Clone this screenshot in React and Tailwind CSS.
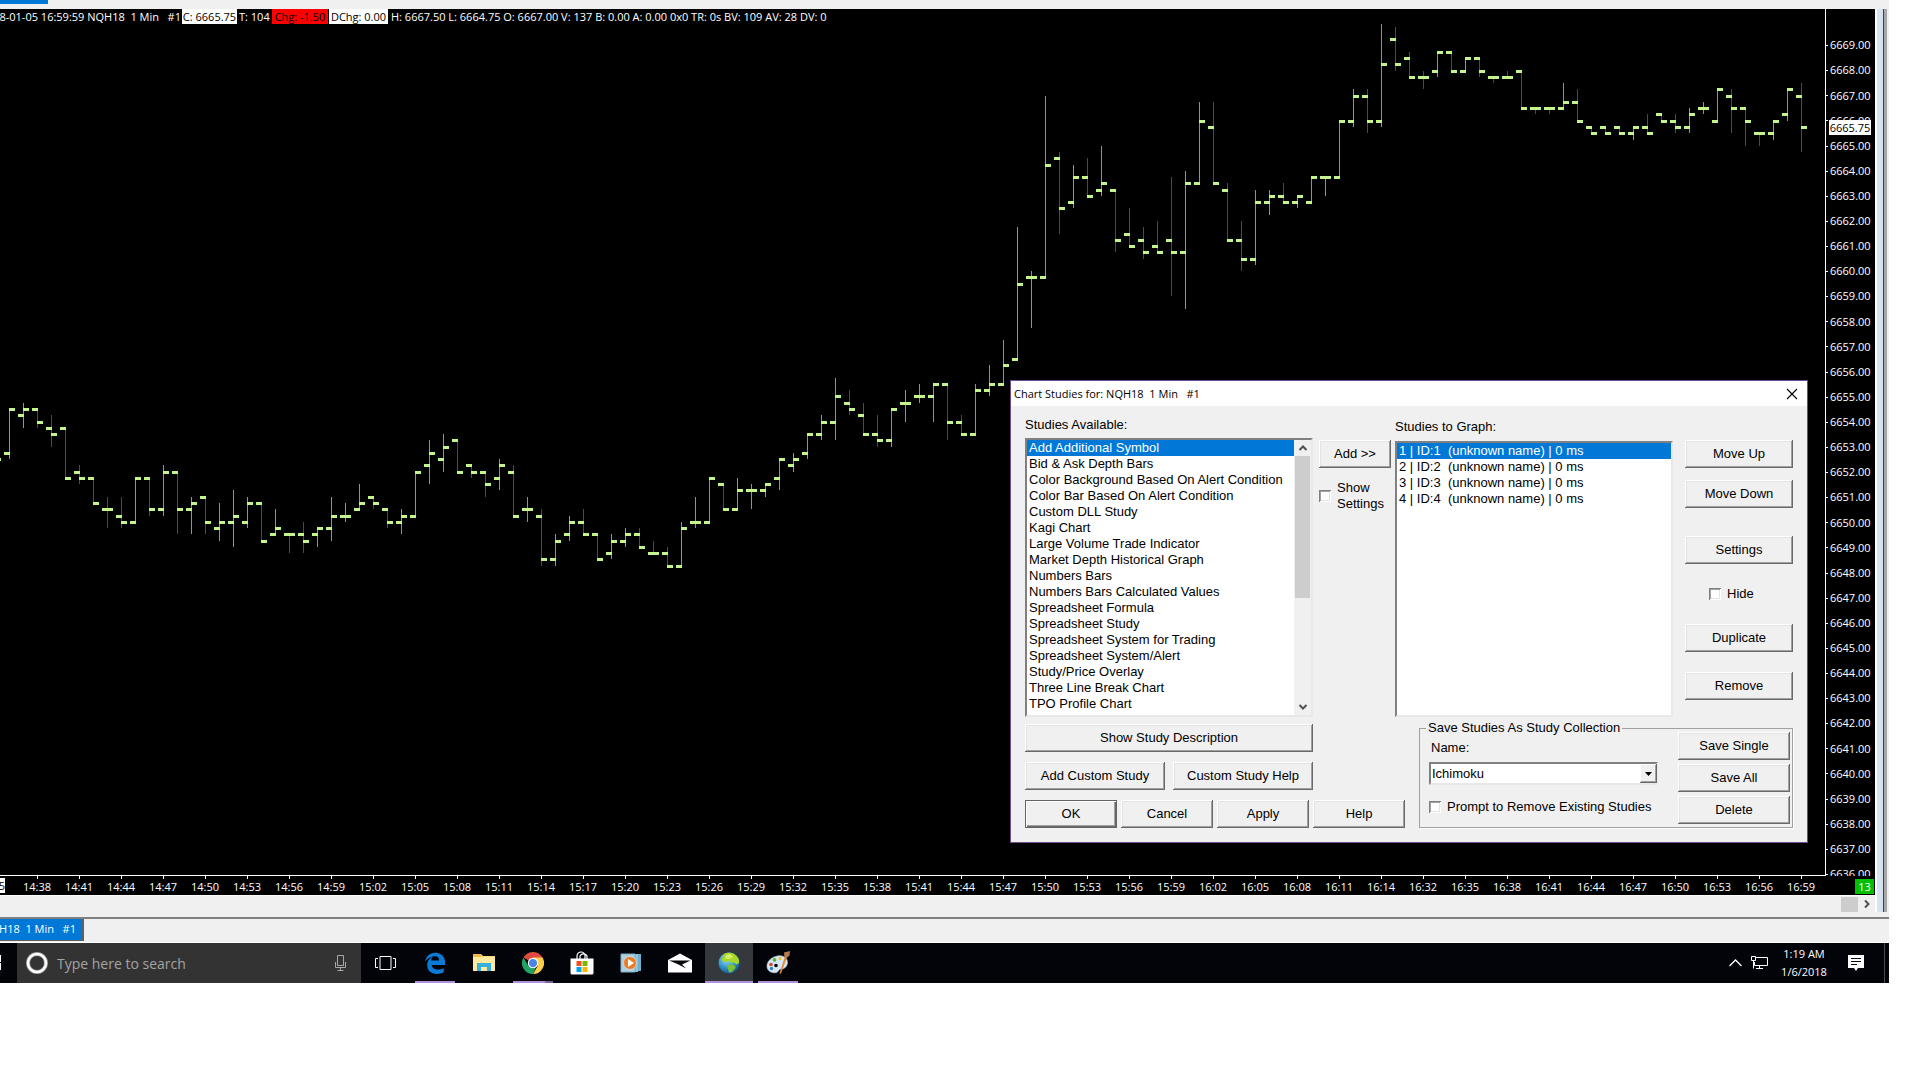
import React from "react";

const PRICES = Array.from({ length: 34 }, (_, i) => (6669 - i).toFixed(2));

const TIMES = [
  "14:38", "14:41", "14:44", "14:47", "14:50", "14:53", "14:56", "14:59", "15:02", "15:05", "15:08",
  "15:11", "15:14", "15:17", "15:20", "15:23", "15:26", "15:29", "15:32", "15:35", "15:38", "15:41",
  "15:44", "15:47", "15:50", "15:53", "15:56", "15:59", "16:02", "16:05", "16:08", "16:11", "16:14",
  "16:32", "16:35", "16:38", "16:41", "16:44", "16:47", "16:50", "16:53", "16:56", "16:59",
];

// Bars in thirds of a pixel below the group's base line: [up, open, close, high, low]
const GROUPS = [
  {
    base: 371,
    bars: [
      [1,220,88,88,236],[1,106,88,70,143],[0,88,127,88,143],[0,145,163,106,200],[0,145,295,145,295],
      [0,277,295,256,311],[0,295,370,295,370],[0,388,388,351,443],[0,409,427,351,443],[1,427,295,295,427],
      [0,295,388,295,407],[1,388,277,256,407],[0,277,388,277,461],[1,388,370,351,461],[0,352,427,352,461],
      [1,445,427,370,482],[1,427,409,331,500],[1,427,370,351,443],[0,370,484,370,484],[1,463,445,388,463],
      [0,463,463,463,518],[0,463,484,427,518],[1,463,445,445,500],[1,445,409,351,482],[1,409,409,370,425],
      [1,388,370,313,388],[0,352,370,352,386],[0,388,427,388,443],[1,427,409,388,461],[1,409,277,277,409],
      [1,256,220,181,311],[1,238,202,163,275],[0,181,277,181,277],[0,256,277,256,293],[0,277,313,277,350],
      [1,295,256,238,329],[0,277,409,256,409],
    ],
  },
  {
    base: 351,
    bars: [
      [1,448,448,412,485],[0,469,598,448,617],[1,598,544,523,617],[1,523,487,469,542],[0,487,523,448,523],
      [0,523,598,523,598],[1,580,544,523,596],[1,544,523,505,559],[0,523,562,505,562],[0,580,580,544,580],
      [0,580,619,562,619],[1,619,505,487,619],[1,487,487,412,503],[1,487,355,355,487],[0,373,448,373,448],
      [1,448,391,355,448],[1,391,391,373,446],[1,391,373,373,410],[1,355,298,298,389],[1,316,298,280,335],
      [1,280,223,223,296],[1,223,187,166,239],[1,187,109,55,239],[0,130,148,91,164],[0,166,223,130,223],
      [0,223,241,166,260],[1,241,148,148,260],[1,130,130,91,185],[1,109,109,73,128],[1,109,73,73,185],
      [0,73,187,73,239],[0,187,223,166,223],[1,223,91,73,223],
    ],
  },
  {
    base: 1,
    bars: [
      [1,1141,1123,1066,1157],[1,1123,1066,991,1123],[1,1048,823,652,1048],[1,802,802,784,953],
      [1,802,466,259,802],[0,445,595,427,671],[1,577,502,466,593],[0,502,559,445,559],[1,541,520,409,557],
      [0,541,691,541,725],[0,673,709,595,709],[0,691,727,652,746],[0,709,727,634,727],[0,691,727,502,857],
      [1,727,520,484,896],[1,520,334,277,520],[0,352,520,277,520],[0,541,691,520,691],[0,691,748,634,782],
      [1,748,577,541,764],[1,577,559,541,614],[0,559,577,520,577],[1,577,559,559,593],[1,577,502,502,577],
      [1,502,502,502,557],[1,502,334,334,502],[1,334,259,238,350],[0,259,334,238,368],[1,334,163,43,350],
      [0,88,163,52,182],[0,145,202,127,202],[0,202,202,184,236],[1,184,127,127,200],[0,127,184,127,184],
      [1,184,145,145,184],[0,145,184,145,200],[0,202,202,202,218],[0,202,202,184,202],[0,184,295,184,295],
      [0,295,295,295,311],[0,295,295,295,311],[1,295,277,220,295],[0,277,334,238,334],[0,352,370,352,370],
      [0,352,370,352,370],[0,352,370,352,370],[1,370,352,352,389],[0,352,370,313,370],[0,313,334,313,334],
      [0,334,352,313,368],[1,352,313,295,368],[1,295,295,277,311],[1,334,238,238,334],[0,259,295,238,368],
      [0,295,334,295,407],[0,370,370,370,407],[1,370,334,334,389],[1,313,238,238,332],[0,259,352,220,425],
    ],
  },
];

const BARS = GROUPS.flatMap(({ base, bars }) =>
  bars.map(([up, ...v]) => [up, ...v.map((n) => base + Math.floor(n / 3))])
);

const STUDIES = [
  "Add Additional Symbol", "Bid & Ask Depth Bars", "Color Background Based On Alert Condition",
  "Color Bar Based On Alert Condition", "Custom DLL Study", "Kagi Chart", "Large Volume Trade Indicator",
  "Market Depth Historical Graph", "Numbers Bars", "Numbers Bars Calculated Values", "Spreadsheet Formula",
  "Spreadsheet Study", "Spreadsheet System for Trading", "Spreadsheet System/Alert", "Study/Price Overlay",
  "Three Line Break Chart", "TPO Profile Chart", "TPO Value Area Lines",
];

function PriceChart() {
  return (
    <svg width="1825" height="866" viewBox="0 0 1825 866" shapeRendering="crispEdges" className="block" role="img" aria-label="NQH18 one minute bars">
      <rect x="0" y="449" width="1" height="3" fill="#c3f58c" />
      {BARS.map(([up, open, close, high, low], i) => {
        const x = 9 + i * 14;
        return (
          <g key={i}>
            <rect x={x} y={high} width="1" height={low - high + 1} fill={up ? "#4fc04f" : "#a82424"} />
            <rect x={x - 5} y={open - 1} width="6" height="3" fill="#c3f58c" />
            <rect x={x} y={close - 1} width="6" height="3" fill="#c3f58c" />
          </g>
        );
      })}
    </svg>
  );
}

function Button({ children, className = "", primary = false }) {
  return (
    <button
      type="button"
      className={
        "h-7 bg-[#f0f0f0] text-center " +
        (primary
          ? "border border-[#646464] shadow-[inset_1px_1px_0_#fff,inset_-1px_-1px_0_#696969,inset_-2px_-2px_0_#a0a0a0] "
          : "shadow-[inset_-1px_-1px_0_#696969,inset_1px_1px_0_#fff,inset_-2px_-2px_0_#a0a0a0,inset_2px_2px_0_#e3e3e3] ") +
        className
      }
    >
      {children}
    </button>
  );
}

function Check({ children, className = "" }) {
  return (
    <label className={"flex items-center gap-1.5 " + className}>
      <input
        type="checkbox"
        className="size-3 shrink-0 appearance-none bg-white shadow-[inset_1px_1px_0_#808080,inset_-1px_-1px_0_#fff,inset_2px_2px_0_#a0a0a0,inset_-2px_-2px_0_#e3e3e3]"
      />
      <span>{children}</span>
    </label>
  );
}

const sunken =
  "bg-white border-2 border-t-[#808080] border-l-[#808080] border-r-[#e8e8e8] border-b-[#e8e8e8]";

function Chevron({ d }) {
  return (
    <svg width="10" height="10" viewBox="0 0 10 10" fill="none" stroke="#505050" strokeWidth="2">
      <path d={d} />
    </svg>
  );
}

function StudiesDialog() {
  return (
    <section
      role="dialog"
      aria-label="Chart Studies"
      className="absolute top-[371px] left-[1010px] w-[798px] border border-[#6f4b8b] bg-[#f0f0f0] pb-[14px] font-['Arial','Liberation_Sans',sans-serif] text-[13px] leading-4 text-black"
    >
      <header className="flex h-[25px] items-center justify-between bg-white pr-[9px] pl-[3px] font-['Segoe_UI','Open_Sans',sans-serif] text-[11px]">
        <h2 className="whitespace-pre">Chart Studies for: NQH18  1 Min   #1</h2>
        <button type="button" aria-label="Close">
          <svg width="12" height="12" viewBox="0 0 12 12" stroke="#000" strokeWidth="1.1">
            <path d="M1 1l10 10M11 1L1 11" />
          </svg>
        </button>
      </header>

      <div className="flex pl-[14px]">
        <div className="w-[288px] pt-[11px]">
          <h3>Studies Available:</h3>
          <div className={"mt-[5px] flex h-[279px] overflow-hidden " + sunken}>
            <ul role="listbox" aria-label="Studies Available" className="min-w-0 flex-1 whitespace-nowrap">
              {STUDIES.map((s, i) => (
                <li
                  key={s}
                  role="option"
                  aria-selected={i === 0}
                  className={"pl-0.5 " + (i === 0 ? "bg-[#0078d7] text-white" : "")}
                >
                  {s}
                </li>
              ))}
            </ul>
            <div className="flex w-[17px] flex-col items-center bg-[#f0f0f0]">
              <div className="flex h-4 items-center"><Chevron d="M1.500 7L5 3.500 8.500 7" /></div>
              <div className="h-[142px] w-[15px] bg-[#cdcdcd]" />
              <div className="mt-auto flex h-4 items-center"><Chevron d="M1.500 3L5 6.500 8.500 3" /></div>
            </div>
          </div>
        </div>

        <div className="w-[82px] pt-[34px] pl-1.5">
          <Button className="w-[72px]">Add &gt;&gt;</Button>
          <Check className="mt-3 w-[72px]">Show Settings</Check>
        </div>

        <div className="w-[278px] pt-[13px]">
          <h3>Studies to Graph:</h3>
          <ul role="listbox" aria-label="Studies to Graph" className={"mt-[6px] h-[276px] " + sunken}>
            {[1, 2, 3, 4].map((n) => (
              <li
                key={n}
                role="option"
                aria-selected={n === 1}
                className={"pl-0.5 whitespace-pre " + (n === 1 ? "bg-[#0078d7] text-white" : "")}
              >
                {`${n} | ID:${n}  (unknown name) | 0 ms`}
              </li>
            ))}
          </ul>
        </div>

        <div className="ml-3 flex w-[108px] flex-col pt-[34px]">
          <Button>Move Up</Button>
          <Button className="mt-3">Move Down</Button>
          <Button className="mt-7">Settings</Button>
          <Check className="mt-[22px] ml-6">Hide</Check>
          <Button className="mt-[22px]">Duplicate</Button>
          <Button className="mt-5">Remove</Button>
        </div>
      </div>

      <div className="flex pl-[14px]">
        <div className="flex w-[380px] flex-col gap-2.5 pt-[7px]">
          <Button className="w-[288px]">Show Study Description</Button>
          <div className="flex gap-2">
            <Button className="w-[140px]">Add Custom Study</Button>
            <Button className="w-[140px]">Custom Study Help</Button>
          </div>
          <div className="flex gap-1">
            <Button primary className="w-[92px]">OK</Button>
            <Button className="w-[92px]">Cancel</Button>
            <Button className="w-[92px]">Apply</Button>
            <Button className="w-[92px]">Help</Button>
          </div>
        </div>

        <fieldset className="mt-[3px] ml-[14px] h-[108px] w-[374px] border border-[#a0a0a0] pr-0.5 pl-[9px] shadow-[1px_1px_0_#fff]">
          <legend className="-ml-[3px] px-0.5">Save Studies As Study Collection</legend>
          <div className="flex w-full justify-between">
            <div className="w-[229px] pt-1">
              <label htmlFor="collection" className="ml-0.5 block">Name:</label>
              <div className="relative mt-1.5">
                <select
                  id="collection"
                  className={"block h-[23px] w-full appearance-none pl-px " + sunken}
                >
                  <option>Ichimoku</option>
                </select>
                <span className="pointer-events-none absolute top-0.5 right-px flex h-[19px] w-[17px] items-center justify-center bg-[#f0f0f0] shadow-[inset_-1px_-1px_0_#696969,inset_1px_1px_0_#fff,inset_-2px_-2px_0_#a0a0a0]">
                  <svg width="7" height="4" viewBox="0 0 7 4"><path d="M0 0h7L3.500 4z" /></svg>
                </span>
              </div>
              <Check className="mt-[14px] whitespace-nowrap">Prompt to Remove Existing Studies</Check>
            </div>
            <div className="-mt-1 flex w-[112px] flex-col gap-1">
              <Button>Save Single</Button>
              <Button>Save All</Button>
              <Button>Delete</Button>
            </div>
          </div>
        </fieldset>
      </div>
    </section>
  );
}

function EdgeIcon() {
  return (
    <svg width="22" height="22" viewBox="0 0 24 24" fill="#0b7bd8">
      <path d="M1.300 10.600C2 4.600 6.300.800 12.300.800c6.600 0 10.700 4.700 10.700 10.600v2.700H8.400c.3 3.500 3.500 5 6.800 5 2.300 0 4.500-.6 6.300-1.700v4.700c-2 1.200-4.700 1.800-7.500 1.800-6.400 0-10.500-3.800-10.500-9.500 0-4.200 2.400-7.600 6-9.200-1.100 1.100-1.500 2.800-1.600 4.200h8.600c0-3-1.500-4.700-4.600-4.700-4.200 0-8.300 2.500-10.600 5.900z" />
    </svg>
  );
}

function FolderIcon() {
  return (
    <svg width="22" height="20" viewBox="0 0 22 20">
      <path d="M0 1h8l2 2h12v15H0z" fill="#f7d978" />
      <path d="M0 1h8v3H0z" fill="#efb93f" />
      <path d="M0 4h22v14H0z" fill="#fde9a0" />
      <path d="M4 10h14v8h-4v-4H8v4H4z" fill="#35aee0" />
    </svg>
  );
}

function ChromeIcon() {
  return (
    <svg width="22" height="22" viewBox="0 0 24 24">
      <path d="M12 12L1.600 6A12 12 0 0 1 22.400 6z" fill="#dd4b3e" />
      <path d="M12 6h10.400A12 12 0 0 1 12 24l5.200-9z" fill="#fdcf4a" />
      <path d="M1.600 6l5.200 9 5.200 3 3-1.500L12 24A12 12 0 0 1 1.600 6z" fill="#1fa463" />
      <circle cx="12" cy="12" r="5.700" fill="#fff" />
      <circle cx="12" cy="12" r="4.500" fill="#4a86e8" />
    </svg>
  );
}

function StoreIcon() {
  return (
    <svg width="24" height="24" viewBox="0 0 24 24">
      <path d="M7 8V5a4 4 0 0 1 8 0v3M10 8V5a4 4 0 0 1 7 0v3" fill="none" stroke="#fff" strokeWidth="1.200" />
      <path d="M.5 7.500h23V22a1.500 1.500 0 0 1-1.500 1.500H2A1.500 1.500 0 0 1 .5 22z" fill="#fff" />
      <path d="M6.500 10h5v5h-5z" fill="#f05022" />
      <path d="M12.500 10h5v5h-5z" fill="#7db700" />
      <path d="M6.500 16h5v5h-5z" fill="#00a3ee" />
      <path d="M12.500 16h5v5h-5z" fill="#ffb800" />
    </svg>
  );
}

function PlayerIcon() {
  return (
    <svg width="22" height="20" viewBox="0 0 22 20">
      <path d="M6 1h15v17H6z" fill="#6fb0cf" />
      <path d="M4 1h14v18H4z" fill="#8cc3dc" />
      <path d="M1 1h14v18H1z" fill="#b0cfdd" stroke="#7fb0c8" />
      <circle cx="10" cy="10" r="6.500" fill="#ee7b22" stroke="#cfd8dd" />
      <path d="M8 6l6 4-6 4z" fill="#fff" />
    </svg>
  );
}

function MailIcon() {
  return (
    <svg width="24" height="20" viewBox="0 0 24 20">
      <path d="M0 7L12 .500 24 7v12.500H0z" fill="#fff" />
      <path d="M1 7.500h21.500L14 11.500l4 4L9.500 11z" fill="#05070b" />
    </svg>
  );
}

function GlobeIcon() {
  return (
    <svg width="22" height="22" viewBox="0 0 22 22">
      <defs>
        <radialGradient id="sea" cx="40%" cy="30%" r="75%">
          <stop offset="0" stopColor="#9be0f5" />
          <stop offset="0.600" stopColor="#2f8fc8" />
          <stop offset="1" stopColor="#15507f" />
        </radialGradient>
      </defs>
      <circle cx="11" cy="11" r="10.500" fill="url(#sea)" />
      <path d="M6 2C9 .500 14 0 17.500 3c3 2.500 4 5 3.500 8l-2.500 1.500-2.500-2-3 .500-2.500-2L6 10 3.500 8z" fill="#a6d626" />
      <path d="M9 13.500l4-1.500 4 1.500.500 2.500-3.500 4-3 .500-1-3.500z" fill="#7cc038" />
      <path d="M8 3l4-1 3 3-4 2-4-.500z" fill="#d7ee6a" />
    </svg>
  );
}

function PaintIcon() {
  return (
    <svg width="24" height="24" viewBox="0 0 24 24">
      <path d="M11 5c6-1.500 11 2 10.500 7-.5 4-3.500 6-6 6-2 0-2.500 1-4 3-2.500 2-10 .500-10.500-5C.500 10.500 5 6.500 11 5z" fill="#d6e8f5" stroke="#9fbdd2" strokeWidth=".6" />
      <circle cx="10" cy="14.500" r="1.800" fill="#05070b" />
      <circle cx="5" cy="13.500" r="1.800" fill="#d8452e" />
      <circle cx="8.500" cy="8.800" r="1.900" fill="#58b32e" />
      <circle cx="14" cy="7.500" r="1.600" fill="#efc12f" />
      <circle cx="5.500" cy="17.500" r="1.700" fill="#3c7fd0" />
      <path d="M19 5l2 1.500-6 16-1.500.500.500-2z" fill="#e08a3c" />
      <path d="M18 1.500L24 0l-.500 4.500-3 2.500-2-1z" fill="#b77a4d" />
    </svg>
  );
}

const APPS = [
  { name: "Edge", icon: EdgeIcon, running: true },
  { name: "File Explorer", icon: FolderIcon },
  { name: "Chrome", icon: ChromeIcon, running: true, stacked: true },
  { name: "Store", icon: StoreIcon },
  { name: "Media Player", icon: PlayerIcon },
  { name: "Mail", icon: MailIcon },
  { name: "Charts", icon: GlobeIcon, running: true, active: true },
  { name: "Paint", icon: PaintIcon, running: true },
];

function Taskbar() {
  return (
    <footer className="flex h-10 bg-[#02040a] font-['Segoe_UI','Open_Sans',sans-serif] text-white">
      <button type="button" aria-label="Start" className="flex w-[17px] items-center">
        <svg width="2" height="18" viewBox="0 0 2 18" fill="#fff"><path d="M0 1h1v7H0zM0 9h1v7H0z" /></svg>
      </button>
      <label className="flex w-[344px] items-center bg-[#333] pr-[14px] pl-[9px]">
        <svg width="22" height="22" viewBox="0 0 22 22" fill="none">
          <circle cx="11" cy="11" r="9" stroke="#9a9a9a" strokeWidth="4" />
          <circle cx="11" cy="11" r="9" stroke="#fff" strokeWidth="2.500" />
        </svg>
        <input
          type="text"
          aria-label="Search"
          placeholder="Type here to search"
          className="ml-[9px] min-w-0 flex-1 bg-transparent text-[14px] outline-none placeholder:text-[#a3a3a3]"
        />
        <svg width="13" height="18" viewBox="0 0 13 18" fill="none" stroke="#a8a8a8">
          <path d="M3.500 1.500h6v10h-6zM1.500 8v5.500h10V8M6.500 13.500v3M3.500 16.500h6" />
        </svg>
      </label>
      <button type="button" aria-label="Task view" className="flex w-12 items-center justify-center">
        <svg width="21" height="16" viewBox="0 0 21 16" fill="none" stroke="#fff">
          <path d="M5 1.500h11v13H5zM3 3.500H.5v9H3M18 3.500h2.500v9H18" />
        </svg>
      </button>
      <nav className="ml-0.5 flex gap-px">
        {APPS.map(({ name, icon: Icon, running, active, stacked }) => (
          <button
            key={name}
            type="button"
            aria-label={name}
            className={"flex w-12 flex-col items-center " + (active ? "bg-[#35383d]" : "")}
          >
            <span className="flex flex-1 items-center pt-0.5">
              <Icon />
            </span>
            <span className={"flex h-0.5 " + (active ? "w-full " : "w-10 ") + (running ? "bg-[#b08fd8]" : "")}>
              {stacked && <span className="ml-auto w-2 bg-[#7b6398]" />}
            </span>
          </button>
        ))}
      </nav>
      <div className="ml-auto flex items-center">
        <button type="button" aria-label="Show hidden icons">
          <svg width="13" height="8" viewBox="0 0 13 8" fill="none" stroke="#fff" strokeWidth="1.300"><path d="M.5 7l6-6 6 6" /></svg>
        </button>
        <svg className="ml-[9px]" width="17" height="14" viewBox="0 0 17 14" fill="none" stroke="#fff">
          <path d="M5 1.500h11.500v8H3.500V6M.5.500h4v4h-4zM2.500 4.500v8M8.500 9.500v3M5 12.500h7" />
        </svg>
        <time className="ml-3 w-[48px] text-center text-[11px] leading-[18px] whitespace-nowrap">
          1:19 AM
          <br />
          1/6/2018
        </time>
        <button type="button" aria-label="Notifications" className="ml-5">
          <svg width="16" height="16" viewBox="0 0 16 16">
            <path d="M0 0h16v13h-6l-2 3-2-3H0z" fill="#fff" />
            <path d="M3 3.500h10M3 6.500h10M3 9.500h6" stroke="#02040a" />
          </svg>
        </button>
        <span className="ml-5 h-10 w-px bg-[#4a4c50]" />
        <span className="w-1" />
      </div>
    </footer>
  );
}

export default function App() {
  return (
    <div className="min-h-screen overflow-x-hidden bg-white">
      <main className="mr-[31px] bg-[#f0f0f0] font-['Segoe_UI','Open_Sans',sans-serif] text-[11px]">
        <div className="flex h-[9px] flex-col">
          <div className="h-1 w-12 bg-[#0078d7]" />
        </div>

        <div className="flex">
          <div className="min-w-0 flex-1">
            <div className="relative bg-black text-white">
              <div className="absolute top-0 left-0 flex h-[15px] items-center leading-[15px] whitespace-pre">
                <div className="flex w-[181px] justify-end overflow-hidden">2018-01-05 16:59:59 NQH18  1 Min   #1</div>
                <span className="ml-px w-[55px] bg-white text-center text-black">C: 6665.75</span>
                <span className="ml-0.5 w-[33px]">T: 104</span>
                <span className="w-[56px] bg-[#ff0000] text-center text-black">Chg: -1.50</span>
                <span className="ml-px w-[59px] bg-white text-center text-black">DChg: 0.00</span>
                <span className="ml-[3px]">H: 6667.50 L: 6664.75 O: 6667.00 V: 137 B: 0.00 A: 0.00 0x0 TR: 0s BV: 109 AV: 28 DV: 0</span>
              </div>

              <div className="flex h-[867px]">
                <div className="min-w-0 flex-1 overflow-hidden border-r border-b border-white">
                  <PriceChart />
                </div>
                <div className="relative w-[49px] overflow-hidden pt-6">
                  <ol className="grid h-[854px] auto-rows-fr">
                    {PRICES.map((p) => (
                      <li key={p} className="flex items-center gap-0.5">
                        <span className="h-px w-0.5 bg-white" />
                        {p}
                      </li>
                    ))}
                  </ol>
                  <span className="absolute top-[111px] left-[3px] h-[15px] w-[42px] bg-white text-center leading-[15px] text-black">
                    6665.75
                  </span>
                </div>
              </div>

              <div className="flex h-[19px]">
                <ol className="flex min-w-0 flex-1 overflow-hidden">
                  <li className="flex w-4 shrink-0 items-center">
                    <span className="flex h-[15px] w-[5px] justify-end overflow-hidden bg-white leading-[15px] text-black">14:35</span>
                  </li>
                  {TIMES.map((t) => (
                    <li key={t} className="flex w-[42px] shrink-0 flex-col items-center leading-4">
                      <span className="h-[3px] w-px bg-white" />
                      {t}
                    </li>
                  ))}
                </ol>
                <span className="mt-[3px] mr-px h-[15px] w-[19px] bg-[#00c000] text-center leading-[15px]">13</span>
              </div>
              <StudiesDialog />
            </div>
            <div className="flex h-[17px] items-center justify-end border-t border-white pr-[3px]">
              <span className="mr-1 h-[15px] w-[17px] bg-[#cdcdcd]" />
              <Chevron d="M3 1.500L6.500 5 3 8.500" />
            </div>
          </div>
          <div className="w-[14px] border-x-2 border-l-white border-r-[#f0f0f0] bg-[#d6e4f2]">
            <div className="ml-[6px] h-full border-l border-[#404040] bg-[#a8a8a8]" />
          </div>
        </div>

        <div className="mt-[5px] flex h-[26px] border-t-2 border-b border-t-[#808080] border-b-white">
          <button
            type="button"
            className="flex h-[22px] w-[84px] items-center justify-end overflow-hidden border-r-2 border-b border-[#606060] bg-[#0078d7] pr-[6px] whitespace-pre text-white"
          >
            NQH18  1 Min   #1
          </button>
        </div>

        <Taskbar />
      </main>
    </div>
  );
}
